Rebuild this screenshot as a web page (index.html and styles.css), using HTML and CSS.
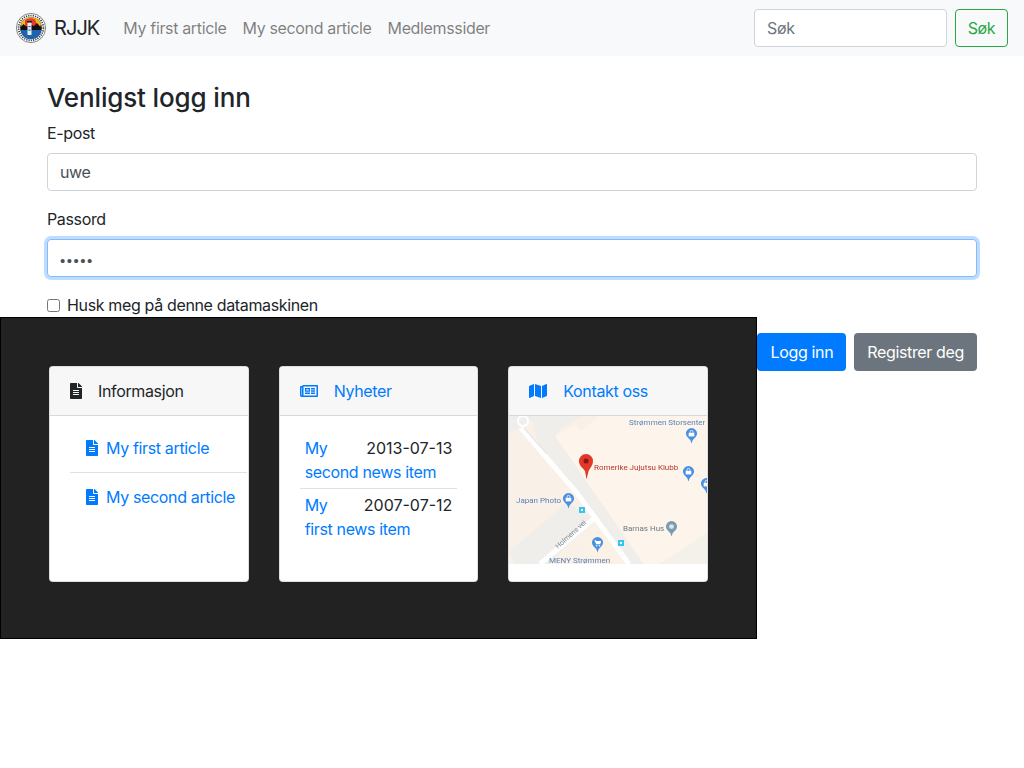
FILE: index.html
```html
<!DOCTYPE html>
<html lang="no">
<head>
<meta charset="utf-8">
<title>RJJK</title>
<link rel="stylesheet" href="styles.css">
</head>
<body>
<svg class="sprite" width="0" height="0" aria-hidden="true">
  <symbol id="i-file" viewBox="0 0 384 512"><path fill="currentColor" d="M224 136V0H24C10.7 0 0 10.7 0 24v464c0 13.3 10.7 24 24 24h336c13.3 0 24-10.7 24-24V160H248c-13.2 0-24-10.8-24-24zm64 236c0 6.6-5.4 12-12 12H108c-6.6 0-12-5.4-12-12v-8c0-6.6 5.4-12 12-12h168c6.6 0 12 5.4 12 12v8zm0-64c0 6.6-5.4 12-12 12H108c-6.6 0-12-5.4-12-12v-8c0-6.6 5.4-12 12-12h168c6.6 0 12 5.4 12 12v8zm0-72v8c0 6.6-5.4 12-12 12H108c-6.6 0-12-5.4-12-12v-8c0-6.6 5.4-12 12-12h168c6.6 0 12 5.4 12 12zm96-114.1v6.1H256V0h6.1c6.4 0 12.5 2.5 17 7l97.9 98c4.5 4.5 7 10.6 7 16.9z"/></symbol>
  <symbol id="i-news" viewBox="0 0 576 512"><path fill="currentColor" d="M552 64H112c-20.858 0-38.643 13.377-45.248 32H24c-13.255 0-24 10.745-24 24v272c0 30.928 25.072 56 56 56h496c13.255 0 24-10.745 24-24V88c0-13.255-10.745-24-24-24zM48 392V144h16v248c0 4.411-3.589 8-8 8s-8-3.589-8-8zm480 8H111.422c.374-2.614.578-5.283.578-8V112h416v288zM172 280h136c6.627 0 12-5.373 12-12v-96c0-6.627-5.373-12-12-12H172c-6.627 0-12 5.373-12 12v96c0 6.627 5.373 12 12 12zm28-80h80v40h-80v-40zm-40 140v-24c0-6.627 5.373-12 12-12h136c6.627 0 12 5.373 12 12v24c0 6.627-5.373 12-12 12H172c-6.627 0-12-5.373-12-12zm192 0v-24c0-6.627 5.373-12 12-12h104c6.627 0 12 5.373 12 12v24c0 6.627-5.373 12-12 12H364c-6.627 0-12-5.373-12-12zm0-144v-24c0-6.627 5.373-12 12-12h104c6.627 0 12 5.373 12 12v24c0 6.627-5.373 12-12 12H364c-6.627 0-12-5.373-12-12zm0 72v-24c0-6.627 5.373-12 12-12h104c6.627 0 12 5.373 12 12v24c0 6.627-5.373 12-12 12H364c-6.627 0-12-5.373-12-12z"/></symbol>
  <symbol id="i-map" viewBox="0 0 576 512"><path fill="currentColor" d="M0 117.66v346.32c0 11.32 11.43 19.06 21.94 14.86L160 416V32L20.12 87.95A32.006 32.006 0 0 0 0 117.66zM192 416l192 64V96L192 32v384zM554.06 33.16L416 96v384l139.88-55.95A31.996 31.996 0 0 0 576 394.34V48.02c0-11.32-11.43-19.06-21.94-14.86z"/></symbol>
  <symbol id="i-bag" viewBox="0 0 16 20"><path fill="currentColor" d="M8 0a7 7 0 0 1 7 7c0 3.600-3.600 6.200-5.600 8.400L8 19.500 6.600 15.400C4.600 13.200 1 10.600 1 7a7 7 0 0 1 7-7z"/><path fill="#fff" d="M4.500 6h7v4.500h-7z"/><path fill="none" stroke="#fff" d="M6.200 6V4.800a1.800 1.800 0 0 1 3.600 0V6"/></symbol>
  <symbol id="i-cart" viewBox="0 0 16 20"><path fill="currentColor" d="M8 0a7 7 0 0 1 7 7c0 3.600-3.600 6.200-5.600 8.400L8 19.500 6.600 15.400C4.600 13.200 1 10.600 1 7a7 7 0 0 1 7-7z"/><path fill="#fff" d="M4 4h2l.5 1h6l-1 4H6.500z"/><circle cx="7" cy="11" r="1" fill="#fff"/><circle cx="10.500" cy="11" r="1" fill="#fff"/></symbol>
  <symbol id="i-dot" viewBox="0 0 16 20"><path fill="currentColor" d="M8 0a7 7 0 0 1 7 7c0 3.600-3.600 6.200-5.600 8.400L8 19.500 6.600 15.400C4.600 13.200 1 10.600 1 7a7 7 0 0 1 7-7z"/><circle cx="8" cy="7" r="3" fill="#dfe6ea"/></symbol>
</svg>

<nav class="navbar">
  <a class="brand" href="#">
    <svg class="logo" viewBox="0 0 30 30" role="img" aria-label="RJJK">
      <circle cx="15" cy="15" r="14.600" fill="#fff" stroke="#666" stroke-width=".8"/>
      <circle cx="15" cy="15" r="12.400" fill="#fff" stroke="#444" stroke-width="1.800" stroke-dasharray="1.200 1.100"/>
      <circle cx="15" cy="15" r="10.800" fill="#111"/>
      <path d="M5 11A10.800 10.800 0 0 1 25 11L24 15H6z" fill="#f6b91d"/>
      <path d="M9 7a10.800 10.800 0 0 1 10-.8L22 14H9z" fill="#e33a2b"/>
      <path d="M4.300 15l3.200-4 2.500 2.500 5-1.500 3 1 3-3 4.400 5z" fill="#111"/>
      <path d="M4.400 17h21.200A10.800 10.800 0 0 1 6 21.500z" fill="#1f63b0"/>
      <rect x="11.500" y="9.500" width="4" height="12.500" fill="#e8eef2"/>
      <rect x="11" y="8" width="5" height="1.500" fill="#222"/>
      <rect x="12.500" y="13" width="2" height="1.200" fill="#1f63b0"/>
      <rect x="12.500" y="16.500" width="2" height="1.200" fill="#1f63b0"/>
    </svg>
    <span>RJJK</span>
  </a>
  <ul class="nav-links">
    <li><a href="#">My first article</a></li>
    <li><a href="#">My second article</a></li>
    <li><a href="#">Medlemssider</a></li>
  </ul>
  <form class="search">
    <input class="control search-input" type="text" placeholder="Søk">
    <button class="btn btn-outline" type="button">Søk</button>
  </form>
</nav>

<main class="main">
  <h1 class="title">Venligst logg inn</h1>
  <form>
    <div class="group">
      <label class="label" for="email">E-post</label>
      <input class="control" id="email" type="text" value="uwe">
    </div>
    <div class="group">
      <label class="label" for="pw">Passord</label>
      <input class="control control-pw is-focus" id="pw" type="password" value="abcde">
    </div>
    <div class="check">
      <input class="check-input" id="rem" type="checkbox">
      <label for="rem">Husk meg på denne datamaskinen</label>
    </div>
    <div class="actions">
      <button class="btn btn-primary" type="button">Logg inn</button>
      <button class="btn btn-secondary" type="button">Registrer deg</button>
    </div>
  </form>
</main>

<footer class="footer">
  <section class="card">
    <header class="card-header">
      <svg class="hicon hicon-file"><use href="#i-file"/></svg>
      <span>Informasjon</span>
    </header>
    <ul class="articles">
      <li><a href="#"><svg class="aicon"><use href="#i-file"/></svg>My first article</a></li>
      <li><a href="#"><svg class="aicon"><use href="#i-file"/></svg>My second article</a></li>
    </ul>
  </section>
  <section class="card">
    <header class="card-header">
      <svg class="hicon hicon-wide link"><use href="#i-news"/></svg>
      <a href="#">Nyheter</a>
    </header>
    <ul class="news">
      <li>
        <div class="news-top"><a href="#">My</a><span class="date">2013-07-13</span></div>
        <a class="news-rest" href="#">second news item</a>
      </li>
      <li>
        <div class="news-top"><a href="#">My</a><span class="date">2007-07-12</span></div>
        <a class="news-rest" href="#">first news item</a>
      </li>
    </ul>
  </section>
  <section class="card">
    <header class="card-header">
      <svg class="hicon hicon-wide link"><use href="#i-map"/></svg>
      <a href="#">Kontakt oss</a>
    </header>
    <svg class="map" viewBox="0 0 198 148" role="img" aria-label="Kart">
      <rect width="198" height="148" fill="#f9f1e7"/>
      <polygon points="0,0 30,0 16,8 0,18" fill="#eeeeec"/>
      <polygon points="22,0 74,0 50,14 46,20 134,148 118,148 30,30" fill="#efeeeb"/>
      <polygon points="46,20 66,9 72,15 90,0 198,0 198,117 151,148 135,148" fill="#fdf5ec"/>
      <polygon points="151,148 198,117 198,148" fill="#f4f1ea"/>
      <polygon points="0,136 58,86 84,102 40,148 6,148" fill="#efeeeb"/>
      <polygon points="71,127 94,111 118,147 90,148" fill="#fbf1e4"/>
      <path d="M12 12L68 77L120 148" fill="none" stroke="#fff" stroke-width="5"/>
      <path d="M15 12L38 38" fill="none" stroke="#e8e8e6" stroke-width="1.500"/>
      <path d="M31 148L88 100" fill="none" stroke="#fff" stroke-width="5"/>
      <circle cx="14" cy="5" r="5" fill="#efefed" stroke="#fff" stroke-width="2"/>
      <text class="map-label map-blue" x="120" y="9">Strømmen Storsenter</text>
      <text class="map-label map-red" x="85" y="54">Romerike Jujutsu Klubb</text>
      <text class="map-label map-blue" x="7" y="87">Japan Photo</text>
      <text class="map-label map-gray" x="114" y="114.500">Barnas Hus</text>
      <text class="map-label map-blue" x="40" y="147">MENY Strømmen</text>
      <text class="map-label map-road" transform="translate(49 133) rotate(-42)">Holmens vei</text>
      <use href="#i-bag" x="176" y="12" width="13" height="16" class="poi"/>
      <use href="#i-bag" x="173" y="50" width="13" height="16" class="poi"/>
      <use href="#i-bag" x="191" y="62" width="13" height="16" class="poi"/>
      <use href="#i-bag" x="53" y="77" width="13" height="16" class="poi"/>
      <use href="#i-cart" x="82" y="121" width="13" height="16" class="poi"/>
      <use href="#i-dot" x="156" y="105" width="13" height="16" class="poi-gray"/>
      <rect x="70" y="91" width="6" height="6" class="transit"/>
      <rect x="109" y="124" width="6" height="6" class="transit"/>
      <rect x="72" y="93" width="2" height="2" fill="#fff"/>
      <rect x="111" y="126" width="2" height="2" fill="#fff"/>
      <path d="M77 38a7 7 0 0 1 7 7.500c0 3.500-2.600 6-4.400 9.500L77.500 63.500 76 55C74 52 70 49.500 70 45.500A7 7 0 0 1 77 38z" fill="#e0392c"/>
      <circle cx="77" cy="45" r="2.500" fill="#8e1410"/>
    </svg>
  </section>
</footer>
</body>
</html>
```
FILE: styles.css
```css
* { box-sizing: border-box; }
html, body { margin: 0; padding: 0; }
body {
  position: relative;
  min-height: 768px;
  background: #fff;
  color: #212529;
  font-family: Inter, "Liberation Sans", sans-serif;
  font-size: 16px;
  line-height: 24px;
  letter-spacing: -.35px;
}
a { color: #007bff; text-decoration: none; }
ul { list-style: none; margin: 0; padding: 0; }
.sprite { position: absolute; }

/* navbar */
.navbar {
  display: flex;
  align-items: center;
  height: 56px;
  padding: 0 16px;
  background: #f8f9fa;
}
.brand {
  display: flex;
  align-items: center;
  gap: 8px;
  margin-right: 16px;
  color: #212529;
  font-size: 20px;
  letter-spacing: -.95px;
}
.logo { width: 30px; height: 30px; display: block; }
.nav-links { display: flex; flex: 1; }
.nav-links a { display: block; padding: 8px; color: rgba(0, 0, 0, .5); }
.search { display: flex; gap: 8px; }

/* controls */
.control {
  display: block;
  width: 100%;
  height: 38px;
  padding: 6px 12px;
  border: 1px solid #ced4da;
  border-radius: 4px;
  background: #fff;
  color: #495057;
  font: inherit;
  letter-spacing: inherit;
  outline: 0;
}
.control::placeholder { color: #6c757d; opacity: 1; }
.search-input { width: 193px; }
.control-pw {
  padding: 8px 12px 4px;
  font-family: "Liberation Sans", sans-serif;
  font-size: 15px;
  letter-spacing: 1.500px;
}
.is-focus {
  border-color: #80bdff;
  box-shadow: 0 0 0 3px rgba(0, 123, 255, .25);
}
.btn {
  height: 38px;
  padding: 6px 12px;
  border: 1px solid transparent;
  border-radius: 4px;
  font: inherit;
  letter-spacing: inherit;
  white-space: nowrap;
}
.btn-outline { width: 53px; padding: 6px 0; border-color: #28a745; background: transparent; color: #28a745; }
.btn-primary { background: #007bff; color: #fff; }
.btn-secondary { background: #6c757d; color: #fff; }

/* login form */
.main { padding: 24px 47px 0; }
.title { margin: 0 0 8px; padding-top: 2px; font-size: 26px; font-weight: 500; line-height: 31px; letter-spacing: -.15px; }
.group { margin-bottom: 16px; }
.label { display: block; margin-bottom: 8px; }
.check { display: flex; align-items: center; gap: 7px; height: 24px; }
.check-input { width: 13px; height: 13px; margin: 0; }
.actions { display: flex; justify-content: flex-end; gap: 8px; margin-top: 16px; }

/* dark footer panel, overlapping the form */
.footer {
  position: absolute;
  top: 317px;
  left: 0;
  display: grid;
  grid-template-columns: repeat(3, 1fr);
  gap: 30px;
  width: 757px;
  height: 322px;
  padding: 48px 48px 56px;
  border: 1px solid #000;
  background: #222;
}
.card {
  overflow: hidden;
  border: 1px solid rgba(0, 0, 0, .125);
  border-radius: 4px;
  background: #fff;
}
.card-header {
  display: flex;
  align-items: center;
  height: 49px;
  padding: 0 20px;
  border-bottom: 1px solid rgba(0, 0, 0, .125);
  background: #f7f7f7;
}
.hicon { flex: none; height: 16px; margin-right: 16px; color: #212529; }
.hicon-file { width: 12px; }
.hicon-wide { width: 18px; }
.hicon.link { color: #007bff; }

.articles { margin: 8px 1px 0 20px; }
.articles li { padding: 12px 0 12px 16px; }
.articles li + li { border-top: 1px solid #dee2e6; }
.articles a { display: flex; align-items: center; white-space: nowrap; }
.aicon { flex: none; width: 12px; height: 16px; margin-right: 8px; color: #007bff; }

.news { margin: 16px 20px 0; }
.news li { padding: 4px 5px; }
.news li + li { border-top: 1px solid #dee2e6; }
.news-top { display: flex; justify-content: space-between; }
.news-rest { display: block; }
.date { letter-spacing: 0; }

.map { display: block; width: 198px; height: 148px; filter: blur(.3px); }
.map-label { font-size: 8px; font-family: Roboto, "Liberation Sans", sans-serif; letter-spacing: 0; }
.map-blue { fill: #5c82b5; }
.map-red { fill: #b8352c; }
.map-gray { fill: #6d7a80; }
.map-road { fill: #7c8a8f; font-size: 7px; }
.poi { color: #4a90e2; }
.poi-gray { color: #7a9cae; }
.transit { fill: #36c5f0; }
```
